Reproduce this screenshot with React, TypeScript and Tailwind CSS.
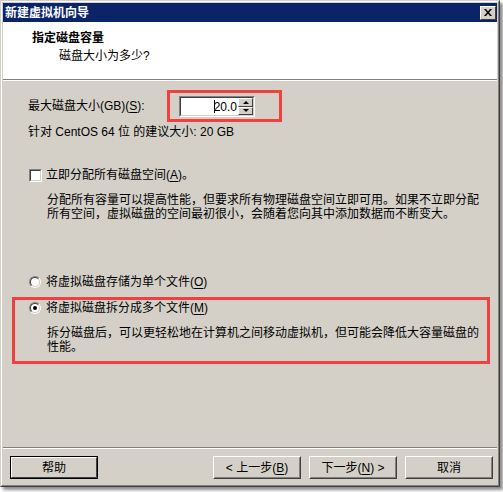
const font = "font-[family-name:'Liberation_Sans','Noto_Sans_CJK_SC',sans-serif]"

function U({ children }: { children: string }) {
  return <span className="underline underline-offset-2">{children}</span>
}

function Radio({ checked }: { checked?: boolean }) {
  return (
    <span className="relative flex h-[12px] w-[12px] shrink-0 items-center justify-center rounded-full border border-t-[#808080] border-l-[#808080] border-r-white border-b-white">
      <span className="flex h-[10px] w-[10px] items-center justify-center rounded-full border border-t-[#404040] border-l-[#404040] border-r-[#d4d0c8] border-b-[#d4d0c8] bg-white">
        {checked && <span className="h-[4px] w-[4px] rounded-full bg-black" />}
      </span>
    </span>
  )
}

function Button({ children, isDefault }: { children: React.ReactNode; isDefault?: boolean }) {
  return (
    <div
      className={
        'h-[23px] w-[88px] ' +
        (isDefault ? 'border border-black' : 'border border-t-white border-l-white border-r-[#404040] border-b-[#404040]')
      }
    >
      <div
        className={
          'flex h-full w-full items-center justify-center text-[12px] leading-none ' +
          (isDefault
            ? 'border border-t-white border-l-white border-r-[#404040] border-b-[#404040]'
            : 'border border-t-[#d4d0c8] border-l-[#d4d0c8] border-r-[#808080] border-b-[#808080]')
        }
      >
        {children}
      </div>
    </div>
  )
}

function SpinBox() {
  return (
    <div className="h-[21px] w-[76px] border border-t-[#808080] border-l-[#808080] border-r-white border-b-white">
      <div className="flex h-full w-full border border-t-[#404040] border-l-[#404040] border-r-[#d4d0c8] border-b-[#d4d0c8] bg-white">
        <div className="flex flex-1 items-center justify-end pr-[1px] text-[12px] leading-none">
          <span className="mr-[-1px] h-[13px] w-[1px] bg-black" />
          20.0
        </div>
        <div className="flex w-[15px] flex-col bg-[#d4d0c8]">
          <div className="flex h-1/2 items-center justify-center border border-t-white border-l-white border-r-[#404040] border-b-[#404040]">
            <span className="h-0 w-0 border-x-[3px] border-b-[3px] border-x-transparent border-b-black" />
          </div>
          <div className="flex h-1/2 items-center justify-center border border-t-white border-l-white border-r-[#404040] border-b-[#404040]">
            <span className="h-0 w-0 border-x-[3px] border-t-[3px] border-x-transparent border-t-black" />
          </div>
        </div>
      </div>
    </div>
  )
}

export default function App() {
  return (
    <div className={`h-[492px] w-[503px] bg-white text-black ${font}`}>
      <div className="h-[487px] w-[500px] border border-t-[#d4d0c8] border-l-[#d4d0c8] border-r-[#404040] border-b-[#404040] shadow-[3px_3px_3px_rgba(0,0,0,0.45)]">
        <div className="flex h-full flex-col border border-t-white border-l-white border-r-[#808080] border-b-[#808080] bg-[#d4d0c8] p-[1px]">
          {/* 标题栏 */}
          <div className="flex h-[19px] shrink-0 items-center justify-between bg-[#0a246a] pl-[2px] pr-[1px]">
            <span className="text-[12px] font-bold leading-none text-white">新建虚拟机向导</span>
            <div className="flex h-[14px] w-[16px] items-center justify-center border border-t-white border-l-white border-r-[#404040] border-b-[#404040] bg-[#d4d0c8]">
              <svg width="8" height="7" viewBox="0 0 8 7">
                <path d="M0 0h2l2 2.5L6 0h2L5 3.5 8 7H6L4 4.5 2 7H0l3-3.5z" fill="black" />
              </svg>
            </div>
          </div>

          {/* 页头 */}
          <div className="flex h-[57px] shrink-0 flex-col bg-white pl-[29px] pt-[9px]">
            <div className="text-[12px] font-bold leading-[14px]">指定磁盘容量</div>
            <div className="ml-[27px] mt-[4px] text-[12px] leading-[14px]">磁盘大小为多少?</div>
          </div>
          <div className="h-[2px] shrink-0 border-t border-t-[#808080] border-b border-b-white" />

          {/* 内容 */}
          <div className="flex flex-1 flex-col pt-[9px] text-[12px]">
            <div className="ml-[25px] flex items-center">
              <span className="w-[139px] leading-[16px]">
                最大磁盘大小(GB)(<U>S</U>):
              </span>
              <div className="border-[3px] border-[#f04040] pb-[2px] pl-[9px] pr-[24px] pt-[3px]">
                <SpinBox />
              </div>
            </div>
            <div className="ml-[25px] mt-[2px] leading-[16px]">针对 CentOS 64 位 的建议大小: 20 GB</div>

            <div className="ml-[26px] mt-[27px] flex items-center leading-[16px]">
              <span className="h-[13px] w-[13px] border border-t-[#808080] border-l-[#808080] border-r-white border-b-white">
                <span className="block h-full w-full border border-t-[#404040] border-l-[#404040] border-r-[#d4d0c8] border-b-[#d4d0c8] bg-white" />
              </span>
              <span className="ml-[4px]">
                立即分配所有磁盘空间(<U>A</U>)。
              </span>
            </div>
            <div className="ml-[44px] mt-[10px] leading-[14px]">
              <div>分配所有容量可以提高性能，但要求所有物理磁盘空间立即可用。如果不立即分配</div>
              <div>所有空间，虚拟磁盘的空间最初很小，会随着您向其中添加数据而不断变大。</div>
            </div>

            <div className="ml-[26px] mt-[53px] flex items-center leading-[16px]">
              <Radio />
              <span className="ml-[5px]">
                将虚拟磁盘存储为单个文件(<U>O</U>)
              </span>
            </div>

            <div className="ml-[9px] mt-[7px] w-[478px] border-[3px] border-[#f04040] pb-[7px] pl-[14px]">
              <div className="flex items-center leading-[16px]">
                <Radio checked />
                <span className="ml-[5px]">
                  将虚拟磁盘拆分成多个文件(<U>M</U>)
                </span>
              </div>
              <div className="ml-[18px] mt-[10px] leading-[14px]">
                <div>拆分磁盘后，可以更轻松地在计算机之间移动虚拟机，但可能会降低大容量磁盘的</div>
                <div>性能。</div>
              </div>
            </div>
          </div>

          {/* 按钮 */}
          <div className="h-[2px] shrink-0 border-t border-t-[#808080] border-b border-b-white" />
          <div className="flex h-[35px] shrink-0 items-start justify-between pl-[7px] pr-[4px] pt-[7px]">
            <Button isDefault>帮助</Button>
            <div className="flex gap-[8px]">
              <Button>
                &lt; 上一步(<U>B</U>)
              </Button>
              <Button>
                下一步(<U>N</U>) &gt;
              </Button>
              <Button>取消</Button>
            </div>
          </div>
        </div>
      </div>
    </div>
  )
}
